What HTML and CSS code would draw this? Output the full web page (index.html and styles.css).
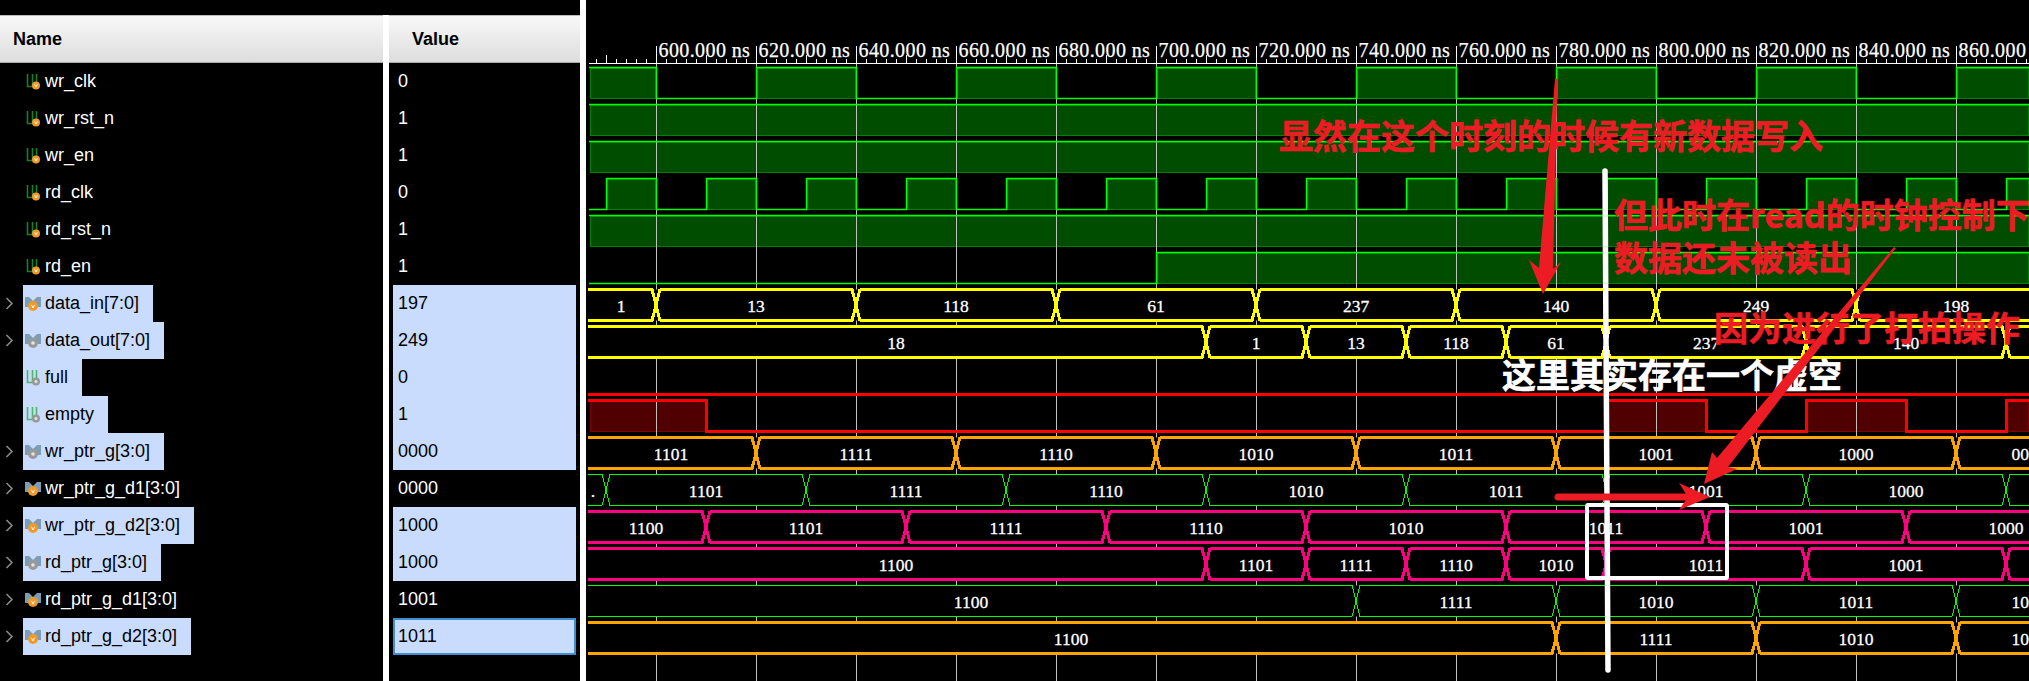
FILE: index.html
```html
<!DOCTYPE html>
<html lang="en">
<head>
  <meta charset="UTF-8">
  <meta name="viewport" content="width=device-width, initial-scale=1.0">
  <title>Waveform</title>
  <link rel="stylesheet" href="styles.css">
</head>
<body>
  <!-- icons shared by the signal list -->
  <svg class="defs" width="0" height="0">
    <symbol id="ic-wire" viewBox="0 0 16 16">
      <path class="ic-line" d="M2.5 0V12.5H7.5V0M11.5 0V8"/>
      <circle class="ic-dot" cx="11" cy="11.5" r="4"/>
      <circle class="ic-core" cx="11" cy="11.5" r="1.5"/>
      <path class="ic-v" d="M9.6 10.4L11 13L12.4 10.4"/>
    </symbol>
    <symbol id="ic-bus" viewBox="0 0 16 16">
      <path class="ic-wing" d="M0 1H4L8 5L12 1H16V11H12L8 7L4 11H0Z"/>
      <circle class="ic-dot" cx="8" cy="10" r="5"/>
      <circle class="ic-core" cx="8" cy="10" r="1.8"/>
      <path class="ic-v" d="M6.4 8.8L8 12L9.6 8.8"/>
    </symbol>
  </svg>

  <div class="signals">
    <div class="names">
      <div class="col-head name-head">Name</div>
      <div class="row"><span class="arrow"></span><span class="item"><svg class="icon reg"><use href="#ic-wire"/></svg>wr_clk</span></div>
      <div class="row"><span class="arrow"></span><span class="item"><svg class="icon reg"><use href="#ic-wire"/></svg>wr_rst_n</span></div>
      <div class="row"><span class="arrow"></span><span class="item"><svg class="icon reg"><use href="#ic-wire"/></svg>wr_en</span></div>
      <div class="row"><span class="arrow"></span><span class="item"><svg class="icon reg"><use href="#ic-wire"/></svg>rd_clk</span></div>
      <div class="row"><span class="arrow"></span><span class="item"><svg class="icon reg"><use href="#ic-wire"/></svg>rd_rst_n</span></div>
      <div class="row"><span class="arrow"></span><span class="item"><svg class="icon reg"><use href="#ic-wire"/></svg>rd_en</span></div>
      <div class="row"><svg class="arrow"><path d="M1.5 1L7 6.5L1.5 12"/></svg><span class="item sel"><svg class="icon reg"><use href="#ic-bus"/></svg>data_in[7:0]</span></div>
      <div class="row"><svg class="arrow"><path d="M1.5 1L7 6.5L1.5 12"/></svg><span class="item sel"><svg class="icon out"><use href="#ic-bus"/></svg>data_out[7:0]</span></div>
      <div class="row"><span class="arrow"></span><span class="item sel"><svg class="icon out"><use href="#ic-wire"/></svg>full</span></div>
      <div class="row"><span class="arrow"></span><span class="item sel"><svg class="icon out"><use href="#ic-wire"/></svg>empty</span></div>
      <div class="row"><svg class="arrow"><path d="M1.5 1L7 6.5L1.5 12"/></svg><span class="item sel"><svg class="icon out"><use href="#ic-bus"/></svg>wr_ptr_g[3:0]</span></div>
      <div class="row"><svg class="arrow"><path d="M1.5 1L7 6.5L1.5 12"/></svg><span class="item"><svg class="icon reg"><use href="#ic-bus"/></svg>wr_ptr_g_d1[3:0]</span></div>
      <div class="row"><svg class="arrow"><path d="M1.5 1L7 6.5L1.5 12"/></svg><span class="item sel"><svg class="icon reg"><use href="#ic-bus"/></svg>wr_ptr_g_d2[3:0]</span></div>
      <div class="row"><svg class="arrow"><path d="M1.5 1L7 6.5L1.5 12"/></svg><span class="item sel"><svg class="icon out"><use href="#ic-bus"/></svg>rd_ptr_g[3:0]</span></div>
      <div class="row"><svg class="arrow"><path d="M1.5 1L7 6.5L1.5 12"/></svg><span class="item"><svg class="icon reg"><use href="#ic-bus"/></svg>rd_ptr_g_d1[3:0]</span></div>
      <div class="row"><svg class="arrow"><path d="M1.5 1L7 6.5L1.5 12"/></svg><span class="item sel"><svg class="icon reg"><use href="#ic-bus"/></svg>rd_ptr_g_d2[3:0]</span></div>
    </div>
    <div class="values">
      <div class="col-head value-head">Value</div>
      <div class="val">0</div>
      <div class="val">1</div>
      <div class="val">1</div>
      <div class="val">0</div>
      <div class="val">1</div>
      <div class="val">1</div>
      <div class="val sel">197</div>
      <div class="val sel">249</div>
      <div class="val sel">0</div>
      <div class="val sel">1</div>
      <div class="val sel">0000</div>
      <div class="val">0000</div>
      <div class="val sel">1000</div>
      <div class="val sel">1000</div>
      <div class="val">1001</div>
      <div class="val sel focus">1011</div>
    </div>
  </div>

  <!-- viewBox keeps page coordinates, so the trace data reads as screen x/y -->
  <svg class="wave" id="wave" viewBox="586 0 1443 681">
    <g id="traces"></g>
    <g class="notes">
      <text class="note" x="1279" y="149">显然在这个时刻的时候有新数据写入</text>
      <text class="note" x="1614" y="228">但此时在read的时钟控制下</text>
      <text class="note" x="1614" y="271">数据还未被读出</text>
      <text class="note" x="1714" y="341">因为进行了打拍操作</text>
      <text class="note white" x="1502" y="388">这里其实存在一个虚空</text>
      <path class="mark" d="M1555 79L1557.5 79L1553 269L1561 262L1543 294L1529 260L1539 268Z"/>
      <rect class="frame" x="1587" y="505" width="140" height="73" rx="1"/>
      <path class="divider" d="M1605 171L1608 670"/>
      <path class="mark" d="M1894 247L1896 248L1728 467L1737 469L1704 484L1712 452L1717 458Z"/>
      <path class="shaft" d="M1558 497H1690"/>
      <path class="mark" d="M1679 483L1710 497L1679 510L1688 497Z"/>
    </g>
  </svg>

  <script src="wave.js"></script>
</body>
</html>
```

FILE: styles.css
```css
body {
  margin: 0;
  width: 2029px;
  height: 681px;
  overflow: hidden;
  display: flex;
  background: #000;
  font-family: "Liberation Sans", Arial, sans-serif;
  font-size: 18px;
  color: #fff;
}
.defs {
  position: absolute;
}

/* signal list */
.signals {
  display: flex;
  flex: none;
  width: 580px;
  padding-top: 15px;
  border-right: 6px solid #fff;
}
.names {
  width: 383px;
  flex: none;
  border-right: 6px solid #fff;
}
.values {
  width: 191px;
  flex: none;
}
.col-head {
  box-sizing: border-box;
  height: 48px;
  line-height: 46px;
  font-weight: bold;
  color: #000;
  background: linear-gradient(#f8f8f8, #dddddd);
  border-top: 1px solid #bbb;
  border-bottom: 1px solid #aaa;
}
.name-head {
  padding-left: 13px;
}
.value-head {
  padding-left: 23px;
}
.row {
  display: flex;
  height: 37px;
}
.arrow {
  width: 23px;
  height: 37px;
  flex: none;
}
.arrow path {
  fill: none;
  stroke: #8a8a8a;
  stroke-width: 1.6;
  transform: translate(5px, 12px);
}
.item {
  display: inline-flex;
  align-items: center;
  gap: 4px;
  padding: 0 14px 0 2px;
}
.item.sel {
  color: #000;
  background: #c9dcfd;
}
.icon {
  width: 16px;
  height: 16px;
  flex: none;
  color: #14812c;
  --dot: #f09a2c;
  --core: transparent;
  --mark: #fff;
}
.icon.out {
  color: #4cb765;
  --dot: #999;
  --core: #e4e4e4;
  --mark: transparent;
}
.ic-line {
  fill: none;
  stroke: currentColor;
  stroke-width: 1.6;
}
.ic-wing {
  fill: #7d9db5;
}
.ic-dot {
  fill: var(--dot);
}
.ic-core {
  fill: var(--core);
}
.ic-v {
  fill: none;
  stroke: var(--mark);
  stroke-width: 0.9;
}
.val {
  box-sizing: border-box;
  height: 37px;
  line-height: 37px;
  margin: 0 4px;
  width: 183px;
  padding-left: 5px;
}
.val.sel {
  color: #000;
  background: #c9dcfd;
}
.val.focus {
  line-height: 33px;
  padding-left: 3px;
  border: 2px solid #3f8fd0;
}

/* waveform canvas */
.wave {
  display: block;
  width: 1443px;
  height: 681px;
  flex: none;
}
.grid {
  stroke: #c0c0c0;
  stroke-width: 1;
  shape-rendering: crispEdges;
}
.ruler {
  stroke: #fff;
  stroke-width: 1;
  shape-rendering: crispEdges;
}
.time {
  font-family: "Liberation Serif", serif;
  font-size: 20px;
  letter-spacing: 0.4px;
  fill: #fff;
  stroke: #fff;
  stroke-width: 0.25;
}
.blank {
  fill: #000;
}
.trace {
  fill: none;
  shape-rendering: crispEdges;
}
.t-green {
  stroke: #00ff00;
  stroke-width: 1;
}
.t-wire {
  fill: none;
  stroke: #00ff00;
  stroke-width: 1.5;
}
.t-red {
  stroke: #ff0000;
  stroke-width: 3;
}
.t-yellow {
  stroke: #ffff00;
  stroke-width: 3;
}
.t-orange {
  stroke: #ffa500;
  stroke-width: 3;
}
.t-pink {
  stroke: #ff0080;
  stroke-width: 3;
}
.fill-green {
  fill: #004d00;
  stroke: #008000;
  shape-rendering: crispEdges;
}
.fill-red {
  fill: #500000;
  stroke: #800000;
  shape-rendering: crispEdges;
}
.label {
  font-family: "Liberation Serif", serif;
  font-size: 17.5px;
  fill: #fff;
  stroke: #fff;
  stroke-width: 0.3;
  text-anchor: middle;
}

/* hand-drawn annotations */
.note {
  font-family: "Noto Sans CJK SC", sans-serif;
  font-size: 34px;
  font-weight: 700;
  fill: #ed1c24;
  stroke: #ed1c24;
  stroke-width: 0.6;
}
.note.white {
  fill: #fff;
  stroke: #fff;
}
.mark {
  fill: #ed1c24;
}
.shaft {
  fill: none;
  stroke: #ed1c24;
  stroke-width: 7;
  stroke-linecap: round;
}
.frame {
  fill: none;
  stroke: #fff;
  stroke-width: 4;
}
.divider {
  fill: none;
  stroke: #fff;
  stroke-width: 5.5;
  stroke-linecap: round;
}
```

FILE: wave.js
```js
// draws the traces from the edge lists below; x/y are page pixels
const RIGHT = 2029;
const SVG_NS = 'http://www.w3.org/2000/svg';
const traces = document.getElementById('traces');

function add(tag, cls, attrs, text) {
  const el = document.createElementNS(SVG_NS, tag);
  el.setAttribute('class', cls);
  for (const key in attrs) el.setAttribute(key, attrs[key]);
  if (text) el.textContent = text;
  traces.appendChild(el);
}

const high = row => 67.5 + 37 * row;
const low = row => high(row) + 31;

// every 100px is 20 ns, with 600 ns at x=656.5
const major = [];
for (let x = 656.5, t = 600; x < RIGHT; x += 100, t += 20) major.push({ x: x, t: t });

// scalar signals: row, level at the left edge, toggle points
function scalar(row, startsHigh, edges, color, startX) {
  const ends = [startX].concat(edges, [RIGHT]);
  let line = '';
  let up = startsHigh;
  ends.slice(0, -1).forEach((x, i) => {
    const next = ends[i + 1];
    if (up) {
      const left = i === 0 ? 590.5 : x + 1;
      add('rect', 'fill-' + color, { x: left, y: high(row) + 1, width: next - left - 1, height: 30 });
    }
    up = !up;
  });
  up = startsHigh;
  ends.slice(0, -1).forEach((x, i) => {
    const y = up ? high(row) : low(row);
    line += (i === 0 ? 'M' : 'L') + x + ' ' + y + 'H' + ends[i + 1];
    up = !up;
  });
  return { cls: color === 'green' ? 't-wire' : 'trace t-' + color, d: line };
}

function toggles(from, step, count) {
  const list = [];
  for (let i = 0; i < count; i++) list.push(from + step * i);
  return list;
}

const clkWr = toggles(656.5, 100, 14);
const clkRd = toggles(606.5, 50, 29);

const lines = [
  scalar(0, true, clkWr, 'green', 589),
  scalar(1, true, [], 'green', 589),
  scalar(2, true, [], 'green', 589),
  scalar(3, false, clkRd, 'green', 589),
  scalar(4, true, [], 'green', 589),
  scalar(5, false, [1156.5], 'green', 589),
  scalar(8, false, [], 'red', 588),
  scalar(9, true, [706.5, 1606.5, 1706.5, 1806.5, 1906.5, 2006.5], 'red', 588)
];

// grid sits over the scalar fills but under the bus rows
major.forEach(m => add('path', 'grid', { d: 'M' + m.x + ' 63V681' }));

// bus signals: [end x, label, optional label x]
const buses = [
  { row: 6, color: 'yellow', segs: [[656, '1'], [856, '13'], [1056, '118'], [1256, '61'], [1456, '237'], [1656, '140'], [1856, '249'], [2056, '198']] },
  { row: 7, color: 'yellow', segs: [[1206, '18'], [1306, '1'], [1406, '13'], [1506, '118'], [1606, '61'], [1806, '237'], [2006, '140'], [2206, '']] },
  { row: 10, color: 'orange', segs: [[756, '1101'], [956, '1111'], [1156, '1110'], [1356, '1010'], [1556, '1011'], [1756, '1001'], [1956, '1000'], [2102, '0000']] },
  { row: 11, color: 'green', segs: [[606, '.', 593], [806, '1101'], [1006, '1111'], [1206, '1110'], [1406, '1010'], [1606, '1011'], [1806, '1001'], [2006, '1000'], [2206, '']] },
  { row: 12, color: 'pink', segs: [[706, '1100'], [906, '1101'], [1106, '1111'], [1306, '1110'], [1506, '1010'], [1706, '1011'], [1906, '1001'], [2106, '1000']] },
  { row: 13, color: 'pink', segs: [[1206, '1100'], [1306, '1101'], [1406, '1111'], [1506, '1110'], [1606, '1010'], [1806, '1011'], [2006, '1001'], [2206, '']] },
  { row: 14, color: 'green', segs: [[1356, '1100'], [1556, '1111'], [1756, '1010'], [1956, '1011'], [2102, '1010']] },
  { row: 15, color: 'orange', segs: [[1556, '1100'], [1756, '1111'], [1956, '1010'], [2102, '1010']] }
];

const H = 4;
buses.forEach(bus => {
  const top = high(bus.row);
  const bot = low(bus.row);
  add('rect', 'blank', { x: 587, y: top, width: RIGHT - 587, height: 31 });
  let upper = '';
  let lower = '';
  let prev = 586;
  bus.segs.forEach((seg, i) => {
    const end = seg[0];
    const start = i === 0 ? 588 : prev + H;
    // each side of the bus crosses over at the transition
    upper += 'M' + start + ' ' + top + 'H' + (end - H) + 'L' + (end + H) + ' ' + bot;
    lower += 'M' + start + ' ' + bot + 'H' + (end - H) + 'L' + (end + H) + ' ' + top;
    prev = end;
  });
  add('path', 'trace t-' + bus.color, { d: upper + lower });
  prev = 586;
  bus.segs.forEach(seg => {
    const x = seg[2] || (prev + seg[0]) / 2;
    add('text', 'label', { x: x, y: top + 22.5 }, seg[1]);
    prev = seg[0];
  });
});

lines.forEach(l => add('path', l.cls, { d: l.d }));

// time ruler
add('path', 'ruler', { d: 'M589 63.5H' + RIGHT });
for (let x = 596.5; x < RIGHT; x += 10) {
  const onMajor = (x - 656.5) % 100 === 0;
  const onMid = (x - 606.5) % 100 === 0;
  const tip = onMajor ? 46 : onMid ? 55 : 59;
  add('path', 'ruler', { d: 'M' + x + ' ' + tip + 'V63' });
}
major.forEach(m => add('text', 'time', { x: m.x + 2, y: 57 }, m.t + '.000 ns'));
```
